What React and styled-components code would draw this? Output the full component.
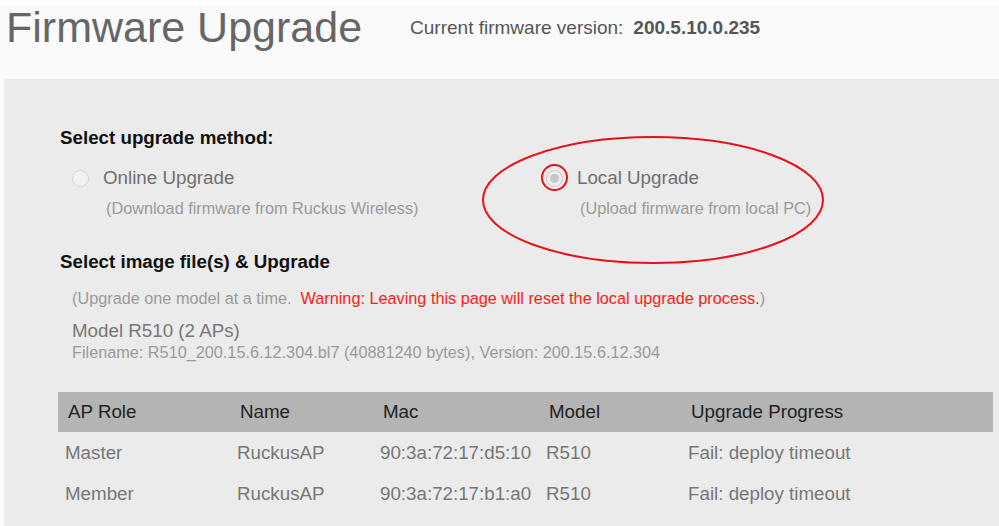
import React from "react";
import styled, { createGlobalStyle } from "styled-components";

const GlobalStyle = createGlobalStyle`
  html, body {
    margin: 0;
    padding: 0;
    background: #fafafa;
    font-family: "Liberation Sans", Arial, sans-serif;
    overflow: hidden;
  }
`;

const Page = styled.div`
  width: 999px;
  height: 526px;
  border-top: 5px solid #ffffff;
  box-sizing: border-box;
  display: flex;
  flex-direction: column;
`;

const Header = styled.header`
  height: 74px;
  display: flex;
  align-items: flex-start;
  padding-left: 6px;
`;

const Title = styled.h1`
  margin: 0;
  font-size: 43px;
  font-weight: 400;
  line-height: 48px;
  color: #666;
  margin-top: -2px;
`;

const Version = styled.div`
  margin: 12px 0 0 48px;
  font-size: 19px;
  line-height: 22px;
  color: #555;

  b {
    margin-left: 10px;
    color: #555;
  }
`;

const Panel = styled.main`
  position: relative;
  flex: 1;
  margin-left: 4px;
  background: #ebebeb;
  padding: 47px 6px 0 54px;
`;

const Heading = styled.h2`
  margin: ${(p) => p.$top || 0}px 0 0 2px;
  font-size: 18.75px;
  line-height: 24px;
  font-weight: 700;
  color: #111;
`;

const Options = styled.div`
  display: grid;
  grid-template-columns: 474px 1fr;
  margin: 16px 0 0 14px;
`;

const Option = styled.div`
  display: grid;
  grid-template-columns: 17px auto;
  column-gap: 14px;
  align-items: center;
`;

const Radio = styled.span`
  position: relative;
  width: 17px;
  height: 17px;
  border-radius: 50%;
  box-sizing: border-box;
  border: 1.5px solid ${(p) => (p.$checked ? "#cacaca" : "#d4d4d4")};
  background: ${(p) => (p.$checked ? "#ededed" : "#f2f2f2")};
  display: flex;
  align-items: center;
  justify-content: center;

  &::before {
    content: "";
    display: ${(p) => (p.$checked ? "block" : "none")};
    width: 9px;
    height: 9px;
    border-radius: 50%;
    background: #c6c6c6;
  }

  &::after {
    content: "";
    display: ${(p) => (p.$marked ? "block" : "none")};
    position: absolute;
    left: -6.5px;
    top: -6.5px;
    width: 27px;
    height: 27px;
    border-radius: 50%;
    border: 2px solid #e8101a;
    box-sizing: border-box;
  }
`;

const OptionLabel = styled.span`
  font-size: 18.75px;
  line-height: 24px;
  color: #6f6f6f;
`;

const OptionHint = styled.span`
  grid-column: 2;
  margin: 8px 0 0 3px;
  font-size: 16.25px;
  line-height: 20px;
  color: #9a9a9a;
`;

const Note = styled.p`
  margin: 14px 0 0 14px;
  font-size: 16.25px;
  line-height: 20px;
  color: #9a9a9a;
`;

const Warning = styled.span`
  color: #ff1a1a;
`;

const ModelName = styled.div`
  margin: 12px 0 0 14px;
  font-size: 18.75px;
  line-height: 22px;
  color: #777;
`;

const FileInfo = styled.div`
  margin-left: 14px;
  font-size: 16.25px;
  line-height: 20px;
  color: #9a9a9a;
`;

const Table = styled.div`
  margin: 30px 0 0 0;
  display: grid;
  grid-template-columns: 172px 143px 166px 142px 1fr;
`;

const HeadCell = styled.div`
  background: #b4b4b4;
  height: 40px;
  line-height: 40px;
  padding-left: 10px;
  font-size: 18.75px;
  color: #222;
`;

const Cell = styled.div`
  height: 41px;
  line-height: 42px;
  padding-left: 7px;
  font-size: 18.75px;
  color: #777;
  white-space: nowrap;
`;

const Annotation = styled.svg`
  position: absolute;
  left: 474px;
  top: 56px;
  pointer-events: none;
`;

const columns = ["AP Role", "Name", "Mac", "Model", "Upgrade Progress"];

const aps = [
  ["Master", "RuckusAP", "90:3a:72:17:d5:10", "R510", "Fail: deploy timeout"],
  ["Member", "RuckusAP", "90:3a:72:17:b1:a0", "R510", "Fail: deploy timeout"],
];

export default function App() {
  return (
    <>
      <GlobalStyle />
      <Page>
        <Header>
          <Title>Firmware Upgrade</Title>
          <Version>
            Current firmware version:<b>200.5.10.0.235</b>
          </Version>
        </Header>
        <Panel>
          <Heading>Select upgrade method:</Heading>
          <Options>
            <Option>
              <Radio />
              <OptionLabel>Online Upgrade</OptionLabel>
              <OptionHint>(Download firmware from Ruckus Wireless)</OptionHint>
            </Option>
            <Option>
              <Radio $checked $marked />
              <OptionLabel>Local Upgrade</OptionLabel>
              <OptionHint>(Upload firmware from local PC)</OptionHint>
            </Option>
          </Options>
          <Heading $top={32}>Select image file(s) &amp; Upgrade</Heading>
          <Note>
            (Upgrade one model at a time.&nbsp;{" "}
            <Warning>
              Warning: Leaving this page will reset the local upgrade process.
            </Warning>
            )
          </Note>
          <ModelName>Model R510 (2 APs)</ModelName>
          <FileInfo>
            Filename: R510_200.15.6.12.304.bl7 (40881240 bytes), Version:
            200.15.6.12.304
          </FileInfo>
          <Table>
            {columns.map((c) => (
              <HeadCell key={c}>{c}</HeadCell>
            ))}
            {aps.map((row) =>
              row.map((v, i) => <Cell key={row[0] + i}>{v}</Cell>)
            )}
          </Table>
          <Annotation width="346" height="132">
            <ellipse
              cx="175"
              cy="65"
              rx="170"
              ry="63"
              fill="none"
              stroke="#e8101a"
              strokeWidth="2"
            />
          </Annotation>
        </Panel>
      </Page>
    </>
  );
}
